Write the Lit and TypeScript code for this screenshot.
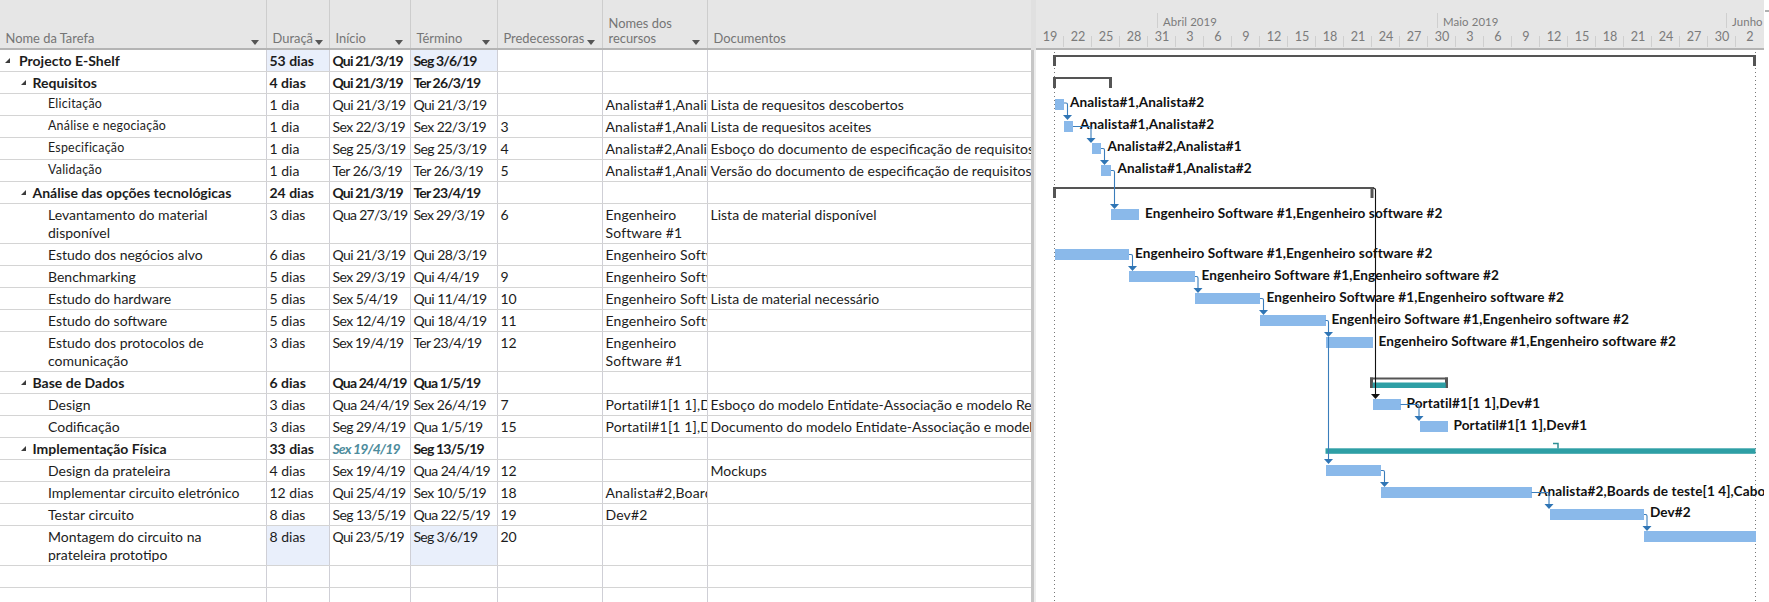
import { LitElement, html, css, svg } from "lit";
import { customElement } from "lit/decorators.js";

type Row = {
  name: string; dur: string; start: string; end: string; pred?: string; res?: string; doc?: string;
  level?: number; small?: boolean; tall?: boolean; hlDur?: boolean; hlEnd?: boolean; late?: boolean; summary?: boolean;
};

const ES = "Engenheiro Software #1,Engenheiro software #2";
const rows: Row[] = [
  { name: "Projecto E-Shelf", dur: "53 dias", start: "Qui 21/3/19", end: "Seg 3/6/19", level: 0, summary: true, hlDur: true, hlEnd: true },
  { name: "Requisitos", dur: "4 dias", start: "Qui 21/3/19", end: "Ter 26/3/19", level: 1, summary: true },
  { name: "Elicitação", dur: "1 dia", start: "Qui 21/3/19", end: "Qui 21/3/19", res: "Analista#1,Analista#2", doc: "Lista de requesitos descobertos", small: true },
  { name: "Análise e negociação", dur: "1 dia", start: "Sex 22/3/19", end: "Sex 22/3/19", pred: "3", res: "Analista#1,Analista#2", doc: "Lista de requesitos aceites", small: true },
  { name: "Especificação", dur: "1 dia", start: "Seg 25/3/19", end: "Seg 25/3/19", pred: "4", res: "Analista#2,Analista#1", doc: "Esboço do documento de especificação de requisitos", small: true },
  { name: "Validação", dur: "1 dia", start: "Ter 26/3/19", end: "Ter 26/3/19", pred: "5", res: "Analista#1,Analista#2", doc: "Versão do documento de especificação de requisitos", small: true },
  { name: "Análise das opções tecnológicas", dur: "24 dias", start: "Qui 21/3/19", end: "Ter 23/4/19", level: 1, summary: true },
  { name: "Levantamento do material disponível", dur: "3 dias", start: "Qua 27/3/19", end: "Sex 29/3/19", pred: "6", res: "Engenheiro Software #1", doc: "Lista de material disponível", tall: true },
  { name: "Estudo dos negócios alvo", dur: "6 dias", start: "Qui 21/3/19", end: "Qui 28/3/19", res: ES },
  { name: "Benchmarking", dur: "5 dias", start: "Sex 29/3/19", end: "Qui 4/4/19", pred: "9", res: ES },
  { name: "Estudo do hardware", dur: "5 dias", start: "Sex 5/4/19", end: "Qui 11/4/19", pred: "10", res: ES, doc: "Lista de material necessário" },
  { name: "Estudo do software", dur: "5 dias", start: "Sex 12/4/19", end: "Qui 18/4/19", pred: "11", res: ES },
  { name: "Estudo dos protocolos de comunicação", dur: "3 dias", start: "Sex 19/4/19", end: "Ter 23/4/19", pred: "12", res: "Engenheiro Software #1", tall: true },
  { name: "Base de Dados", dur: "6 dias", start: "Qua 24/4/19", end: "Qua 1/5/19", level: 1, summary: true },
  { name: "Design", dur: "3 dias", start: "Qua 24/4/19", end: "Sex 26/4/19", pred: "7", res: "Portatil#1[1 1],Dev#1", doc: "Esboço do modelo Entidate-Associação e modelo Relacional" },
  { name: "Codificação", dur: "3 dias", start: "Seg 29/4/19", end: "Qua 1/5/19", pred: "15", res: "Portatil#1[1 1],Dev#1", doc: "Documento do modelo Entidate-Associação e modelo Relacional" },
  { name: "Implementação Física", dur: "33 dias", start: "Sex 19/4/19", end: "Seg 13/5/19", level: 1, summary: true, late: true },
  { name: "Design da prateleira", dur: "4 dias", start: "Sex 19/4/19", end: "Qua 24/4/19", pred: "12", doc: "Mockups" },
  { name: "Implementar circuito eletrónico", dur: "12 dias", start: "Qui 25/4/19", end: "Sex 10/5/19", pred: "18", res: "Analista#2,Boards de teste[1 4],Cabos" },
  { name: "Testar circuito", dur: "8 dias", start: "Seg 13/5/19", end: "Qua 22/5/19", pred: "19", res: "Dev#2" },
  { name: "Montagem do circuito na prateleira prototipo", dur: "8 dias", start: "Qui 23/5/19", end: "Seg 3/6/19", pred: "20", tall: true, hlDur: true, hlEnd: true },
  { name: "", dur: "", start: "", end: "" },
  { name: "", dur: "", start: "", end: "" },
];

const days = [19, 22, 25, 28, 31, 3, 6, 9, 12, 15, 18, 21, 24, 27, 30, 3, 6, 9, 12, 15, 18, 21, 24, 27, 30, 2];
const months = [
  { label: "", w: 121 },
  { label: "Abril 2019", w: 280 },
  { label: "Maio 2019", w: 289 },
  { label: "Junho", w: 38 },
];

// Gantt canvas: page coordinates, converted to canvas origin (1036, 50) below.
const bars = [
  [1055, 99, 1064], [1064, 121, 1073], [1092, 143, 1101], [1101, 165, 1111],
  [1111, 209, 1139], [1055, 249, 1129], [1129, 271, 1195], [1195, 293, 1260],
  [1260, 315, 1325.5], [1325.5, 337, 1372.5], [1372.5, 399, 1400.5], [1419.5, 421, 1447.5],
  [1325.5, 465, 1381], [1381, 487, 1531.5], [1549.5, 509, 1644], [1644, 531, 1755.5],
];
const labels: [number, number, string][] = [
  [1070, 102, "Analista#1,Analista#2"], [1080, 124, "Analista#1,Analista#2"],
  [1107.5, 146, "Analista#2,Analista#1"], [1117.5, 168, "Analista#1,Analista#2"],
  [1145, 212.5, ES], [1135, 252.5, ES], [1201.5, 274.5, ES], [1266.5, 296.5, ES],
  [1331.5, 318.5, ES], [1378.5, 340.5, ES], [1406.5, 402.5, "Portatil#1[1 1],Dev#1"],
  [1453.5, 424.5, "Portatil#1[1 1],Dev#1"], [1538, 490.5, "Analista#2,Boards de teste[1 4],Cabo"],
  [1650, 512, "Dev#2"],
];
// [x0, y0, xTurn, yTip]
const links: [number, number, number, number][] = [
  [1064, 103, 1067.5, 120], [1073, 126.5, 1091, 143], [1101, 148.5, 1104.5, 165],
  [1111, 170.5, 1114.5, 209], [1129, 254.5, 1132.5, 271], [1195, 276.5, 1198, 293],
  [1260, 298.5, 1263.5, 315], [1325.5, 320.5, 1328.5, 337], [1400.5, 404.5, 1419, 421],
  [1381, 470.5, 1384.5, 487], [1531.5, 492.5, 1549, 509], [1644, 514.5, 1647, 531],
];
const OX = 1036, OY = 50;

@customElement("app-root")
export class AppRoot extends LitElement {
  static styles = css`
    :host { display: block; width: 1769px; height: 602px; overflow: hidden; background: #fff;
      font-family: Lato, "Noto Sans", sans-serif; font-size: 14px; color: #1c1c1c; }
    .page { display: flex; height: 602px; }
    .table { width: 1031px; flex: none; display: flex; flex-direction: column; }
    .cols { display: grid; grid-template-columns: 267px 63px 81px 87px 105px 105px 323px; flex: none; }
    .head { height: 50px; box-sizing: border-box; background: #e6e6e6; border-bottom: 2px solid #b4b4b4; color: #757575; font-size: 12.9px; }
    .hc { display: flex; align-items: flex-end; justify-content: space-between; box-sizing: border-box;
      padding: 0 7px 2px 5.5px; border-right: 1px solid #cdcdcd; line-height: 15px; overflow: hidden; white-space: nowrap; }
    .hc:last-child { border-right: 0; }
    .hc svg { flex: none; margin-bottom: 1px; }
    .hc.dur span { width: 40px; overflow: hidden; }
    .hc.dur { padding-right: 6px; }
    .r { border-bottom: 1px solid #d4d4d4; height: 22px; box-sizing: border-box; }
    .r.tall { height: 40px; }
    .c { padding: 2px 0 0 2.5px; border-right: 1px solid #cfcfd6; line-height: 18px; overflow: hidden; white-space: nowrap; }
    .r.tall .c { white-space: normal; }
    .c:last-child { border-right: 0; }
    .r.b .c { font-weight: 700; }
    .dt { letter-spacing: -0.55px; }
    .r.b .dt { letter-spacing: -0.85px; }
    .r.tall .dt { letter-spacing: -0.7px; }
    .rs { letter-spacing: 0.15px; }
    .hl { background: #e9effb; }
    .late { color: #4d8c9c; font-style: italic; }
    .nm { display: flex; align-items: flex-start; }
    .nm.l2 { padding-left: 48px; padding-right: 10px; }
    .nm.l0 { padding-left: 5px; }
    .nm.l1 { padding-left: 20.5px; }
    .nm svg { flex: none; margin: 6px 0 0 0; }
    .nm.l0 svg { margin-right: 9px; }
    .nm.l1 svg { margin-right: 7px; }
    .nm.small span { font-size: 12.4px; line-height: 15px; letter-spacing: 0.25px; }
    .split { width: 5px; flex: none; background: linear-gradient(90deg, #c6c6c6 0 3px, #ececec 3px); }
    .split-top { display: block; height: 50px; background: #e0e0e0; }
    .gantt { width: 733px; flex: none; position: relative; display: flex; flex-direction: column; }
    .ghead { width: 728px; height: 50px; box-sizing: border-box; background: #e6e6e6; border-bottom: 2px solid #b4b4b4; color: #7b7b7b; flex: none; }
    .months { display: flex; height: 30px; padding-top: 13px; box-sizing: border-box; }
    .mo { box-sizing: border-box; border-left: 1px solid #cfcfcf; padding-left: 5px; line-height: 17px; white-space: nowrap; overflow: hidden; height: 15px; font-size: 11.4px; letter-spacing: 0.1px; }
    .mo:first-child { border-left: 0; }
    .days { display: flex; }
    .d { width: 28px; flex: none; text-align: center; line-height: 16px; position: relative; font-size: 12.6px; top: -1px; }
    .d::after { content: ""; position: absolute; right: 0; top: 7px; height: 11px; width: 1px; background: #cfcfcf; }
    .d:last-child::after { display: none; }
    .canvas { position: relative; flex: 1; overflow: hidden; }
    .lines { position: absolute; inset: 0; width: 733px; height: 552px; }
    .bar { position: absolute; height: 11px; background: #8ab9ea; }
    .lab { position: absolute; font-weight: 700; white-space: nowrap; line-height: 16px; color: #111; font-size: 13.6px; letter-spacing: 0.1px; }
    .clip { position: absolute; left: 0; top: 0; width: 728px; height: 552px; overflow: hidden; }
    .edge { position: absolute; right: 0; top: 10px; width: 4px; height: 2px; background: #b0b0b0; }
  `;

  private arrow() {
    return html`<svg width="8" height="5" viewBox="0 0 8 5"><path d="M0 0h8L4 5z" fill="#555"/></svg>`;
  }
  private tri() {
    return html`<svg width="5" height="5" viewBox="0 0 5 5"><path d="M5 0v5H0z" fill="#3c3c3c"/></svg>`;
  }

  private renderHead() {
    const heads = [["Nome da Tarefa", 1], ["Duração", 1, "dur"], ["Início", 1], ["Término", 1], ["Predecessoras", 1], ["Nomes dos recursos", 1, "res"], ["Documentos", 0]] as const;
    return html`<div class="cols head">
      ${heads.map((h) => html`<div class="hc ${(h as any)[2] ?? ""}">
        <span style=${(h as any)[2] === "res" ? "white-space:normal" : ""}>${h[0]}</span>${h[1] ? this.arrow() : ""}
      </div>`)}
    </div>`;
  }

  private renderRow(r: Row) {
    const lvl = r.level ?? 2;
    return html`<div class="cols r ${r.tall ? "tall" : ""} ${r.summary ? "b" : ""}">
      ${r.name
        ? html`<div class="c nm l${lvl} ${r.small ? "small" : ""}">${lvl < 2 ? this.tri() : ""}<span>${r.name}</span></div>`
        : html`<div class="c"></div>`}
      <div class="c ${r.hlDur ? "hl" : ""}">${r.dur}</div>
      <div class="c dt ${r.late ? "late" : ""}">${r.start}</div>
      <div class="c dt ${r.hlEnd ? "hl" : ""}">${r.end}</div>
      <div class="c">${r.pred ?? ""}</div>
      <div class="c rs">${r.res ?? ""}</div>
      <div class="c">${r.doc ?? ""}</div>
    </div>`;
  }

  private renderLines() {
    const X = (x: number) => x - OX, Y = (y: number) => y - OY;
    const summaries: [number, number, number, number][] = [
      [1053, 55, 1756, 66], [1053, 77, 1112, 88], [1053, 187, 1373.5, 198],
    ];
    return html`<svg class="lines" viewBox="0 0 733 552">
      ${[1054.5, 1755.5].map((x) => svg`<line x1=${X(x)} x2=${X(x)} y1="2" y2="552" stroke="#777" stroke-dasharray="1 3"/>`)}
      ${summaries.map(([a, t, b, e]) => svg`
        <rect x=${X(a)} y=${Y(t)} width=${b - a} height="2" fill="#555"/>
        <rect x=${X(a)} y=${Y(t)} width="3" height=${e - t} fill="#555"/>
        <rect x=${X(b) - 3} y=${Y(t)} width="3" height=${e - t} fill="#555"/>`)}
      <rect x=${X(1370)} y=${Y(377.5)} width="78" height="2" fill="#555"/>
      <rect x=${X(1370)} y=${Y(377.5)} width="3" height="10.5" fill="#555"/>
      <rect x=${X(1445)} y=${Y(377.5)} width="3" height="10.5" fill="#555"/>
      <rect x=${X(1372.7)} y=${Y(382.5)} width="73" height="5.5" fill="#2e9fa5"/>
      <rect x=${X(1325.5)} y=${Y(448.3)} width="430" height="5.5" fill="#2e9fa5"/>
      <path d="M${X(1553)} ${Y(443.5)}h5v5" fill="none" stroke="#2e8f95" stroke-width="1.5"/>
    </svg>`;
  }

  private renderLinks() {
    const X = (x: number) => x - OX, Y = (y: number) => y - OY;
    return html`<svg class="lines" viewBox="0 0 733 552">
      ${links.map(([x0, y0, xt, yt]) => svg`
        <path d="M${X(x0)} ${Y(y0)}H${X(xt) - 1.5}Q${X(xt)} ${Y(y0)} ${X(xt)} ${Y(y0) + 1.5}V${Y(yt) - 4}" fill="none" stroke="#3a7dbb" stroke-width="1.1"/>
        <path d="M${X(xt) - 4.5} ${Y(yt) - 5}h9L${X(xt)} ${Y(yt)}z" fill="#2f75b5"/>`)}
      <path d="M${X(1328.5)} ${Y(337)}V${Y(460)}" fill="none" stroke="#3a7dbb" stroke-width="1.1"/>
      <path d="M${X(1328.5) - 4.5} ${Y(459)}h9L${X(1328.5)} ${Y(464)}z" fill="#2f75b5"/>
      <path d="M${X(1373)} ${Y(188)}Q${X(1375.5)} ${Y(188)} ${X(1375.5)} ${Y(190)}V${Y(395)}" fill="none" stroke="#111" stroke-width="1.1"/>
      <path d="M${X(1375.5) - 4.5} ${Y(394)}h9L${X(1375.5)} ${Y(399)}z" fill="#111"/>
    </svg>`;
  }

  render() {
    return html`<div class="page">
      <div class="table">
        ${this.renderHead()}
        ${rows.map((r) => this.renderRow(r))}
      </div>
      <div class="split"><span class="split-top"></span></div>
      <div class="gantt">
        <div class="ghead">
          <div class="months">${months.map((m) => html`<div class="mo" style="width:${m.w}px">${m.label}</div>`)}</div>
          <div class="days">${days.map((d) => html`<div class="d">${d}</div>`)}</div>
        </div>
        <div class="edge"></div>
        <div class="canvas">
          ${this.renderLines()}
          ${bars.map(([a, y, b]) => html`<div class="bar" style="left:${a - OX}px;top:${y - OY}px;width:${b - a}px"></div>`)}
          <div class="clip">
            ${labels.map(([x, y, t]) => html`<div class="lab" style="left:${x - OX}px;top:${y - OY - 8}px">${t}</div>`)}
          </div>
          ${this.renderLinks()}
        </div>
      </div>
    </div>`;
  }
}
